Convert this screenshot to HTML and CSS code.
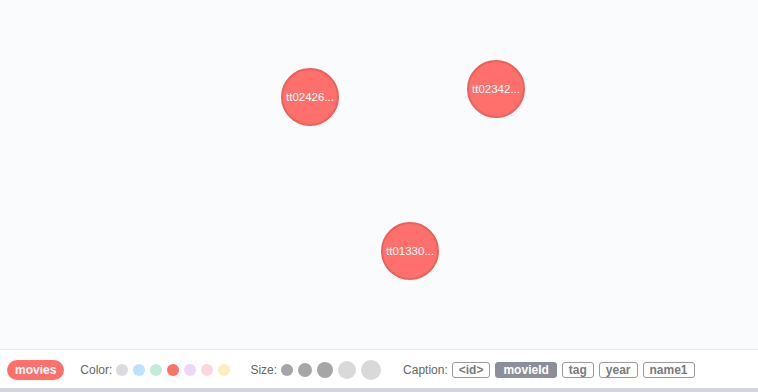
FILE: index.html
```html
<!DOCTYPE html>
<html lang="en">
<head>
    <meta charset="UTF-8">
    <meta name="viewport" content="width=device-width, initial-scale=1.0">
    <title>Graph - movies</title>
    <link rel="stylesheet" href="styles.css">
</head>
<body>
    <div class="view">
        <div class="canvas">
            <div class="node" style="left: 281px; top: 68px;">tt02426...</div>
            <div class="node" style="left: 467px; top: 60px;">tt02342...</div>
            <div class="node" style="left: 381px; top: 222px;">tt01330...</div>
        </div>

        <div class="legend">
            <span class="label-pill">movies</span>

            <span class="legend-title">Color:</span>
            <div class="swatches">
                <span class="dot c-gray"></span>
                <span class="dot c-blue"></span>
                <span class="dot c-green"></span>
                <span class="dot c-red"></span>
                <span class="dot c-purple"></span>
                <span class="dot c-pink"></span>
                <span class="dot c-yellow"></span>
            </div>

            <span class="legend-title">Size:</span>
            <div class="swatches sizes">
                <span class="size on s1"></span>
                <span class="size on s2"></span>
                <span class="size on s3"></span>
                <span class="size s4"></span>
                <span class="size s5"></span>
            </div>

            <span class="legend-title">Caption:</span>
            <div class="captions">
                <span class="cap">&lt;id&gt;</span>
                <span class="cap active">movieId</span>
                <span class="cap">tag</span>
                <span class="cap">year</span>
                <span class="cap">name1</span>
            </div>
        </div>
        <div class="bottom-bar"></div>
    </div>
</body>
</html>
```

FILE: styles.css
```css
html, body {
    margin: 0;
    height: 100%;
}

body {
    font-family: "Liberation Sans", Arial, sans-serif;
    background-color: #f9fbfd;
}

.view {
    display: flex;
    flex-direction: column;
    height: 100vh;
}

.canvas {
    position: relative; /* los nodos se colocan libremente */
    flex: 1;
    background-color: #f9fbfd;
    border-bottom: 1px solid #e5e8ee;
}

.node {
    position: absolute;
    width: 54px;
    height: 54px;
    border-radius: 50%;
    background-color: #ff706c;
    border: 2px solid #e8625e;
    color: #fff;
    font-size: 11.5px;
    display: flex;
    align-items: center;
    justify-content: center;
    white-space: nowrap;
}

.legend {
    height: 38px;
    background-color: #fff;
    display: flex;
    align-items: center;
    padding-left: 7px;
    padding-top: 1px;
    box-sizing: border-box;
    font-size: 12px;
    color: #666;
}

.label-pill {
    height: 20px;
    line-height: 20px;
    padding: 0 8px;
    border-radius: 10px;
    background-color: #ff706c;
    color: #fff;
    font-weight: bold;
    margin-right: 16px;
}

.legend-title {
    margin-right: 4px;
}

.swatches {
    display: flex;
    align-items: center;
    gap: 5px;
    margin-right: 20px;
}

.swatches.sizes {
    margin-right: 22px;
}

.dot {
    width: 12px;
    height: 12px;
    border-radius: 50%;
}

.c-gray { background-color: #d9dbe0; }
.c-blue { background-color: #bee2fa; }
.c-green { background-color: #c2ecd8; }
.c-red { background-color: #ff706c; }
.c-purple { background-color: #ecd6fa; }
.c-pink { background-color: #fcd6e1; }
.c-yellow { background-color: #fdeec0; }

.swatches .size {
    border-radius: 50%;
    background-color: #d9d9d9;
}

.size.on { background-color: #a6a6a6; }
.s1 { width: 12px; height: 12px; }
.s2 { width: 14px; height: 14px; }
.s3 { width: 16px; height: 16px; }
.s4 { width: 18px; height: 18px; }
.s5 { width: 20px; height: 20px; }

.captions {
    display: flex;
    gap: 5px;
}

.cap {
    height: 14px;
    line-height: 14px;
    padding: 0 6px;
    border: 1px solid #9a9a9a;
    border-radius: 3px;
    color: #7a7a7a;
    font-weight: bold;
}

.cap.active {
    background-color: #8c8f99;
    border-color: #8c8f99;
    color: #fff;
    padding: 0 7px;
}

.bottom-bar {
    height: 4px;
    background-color: #d3d4d9;
}
```
